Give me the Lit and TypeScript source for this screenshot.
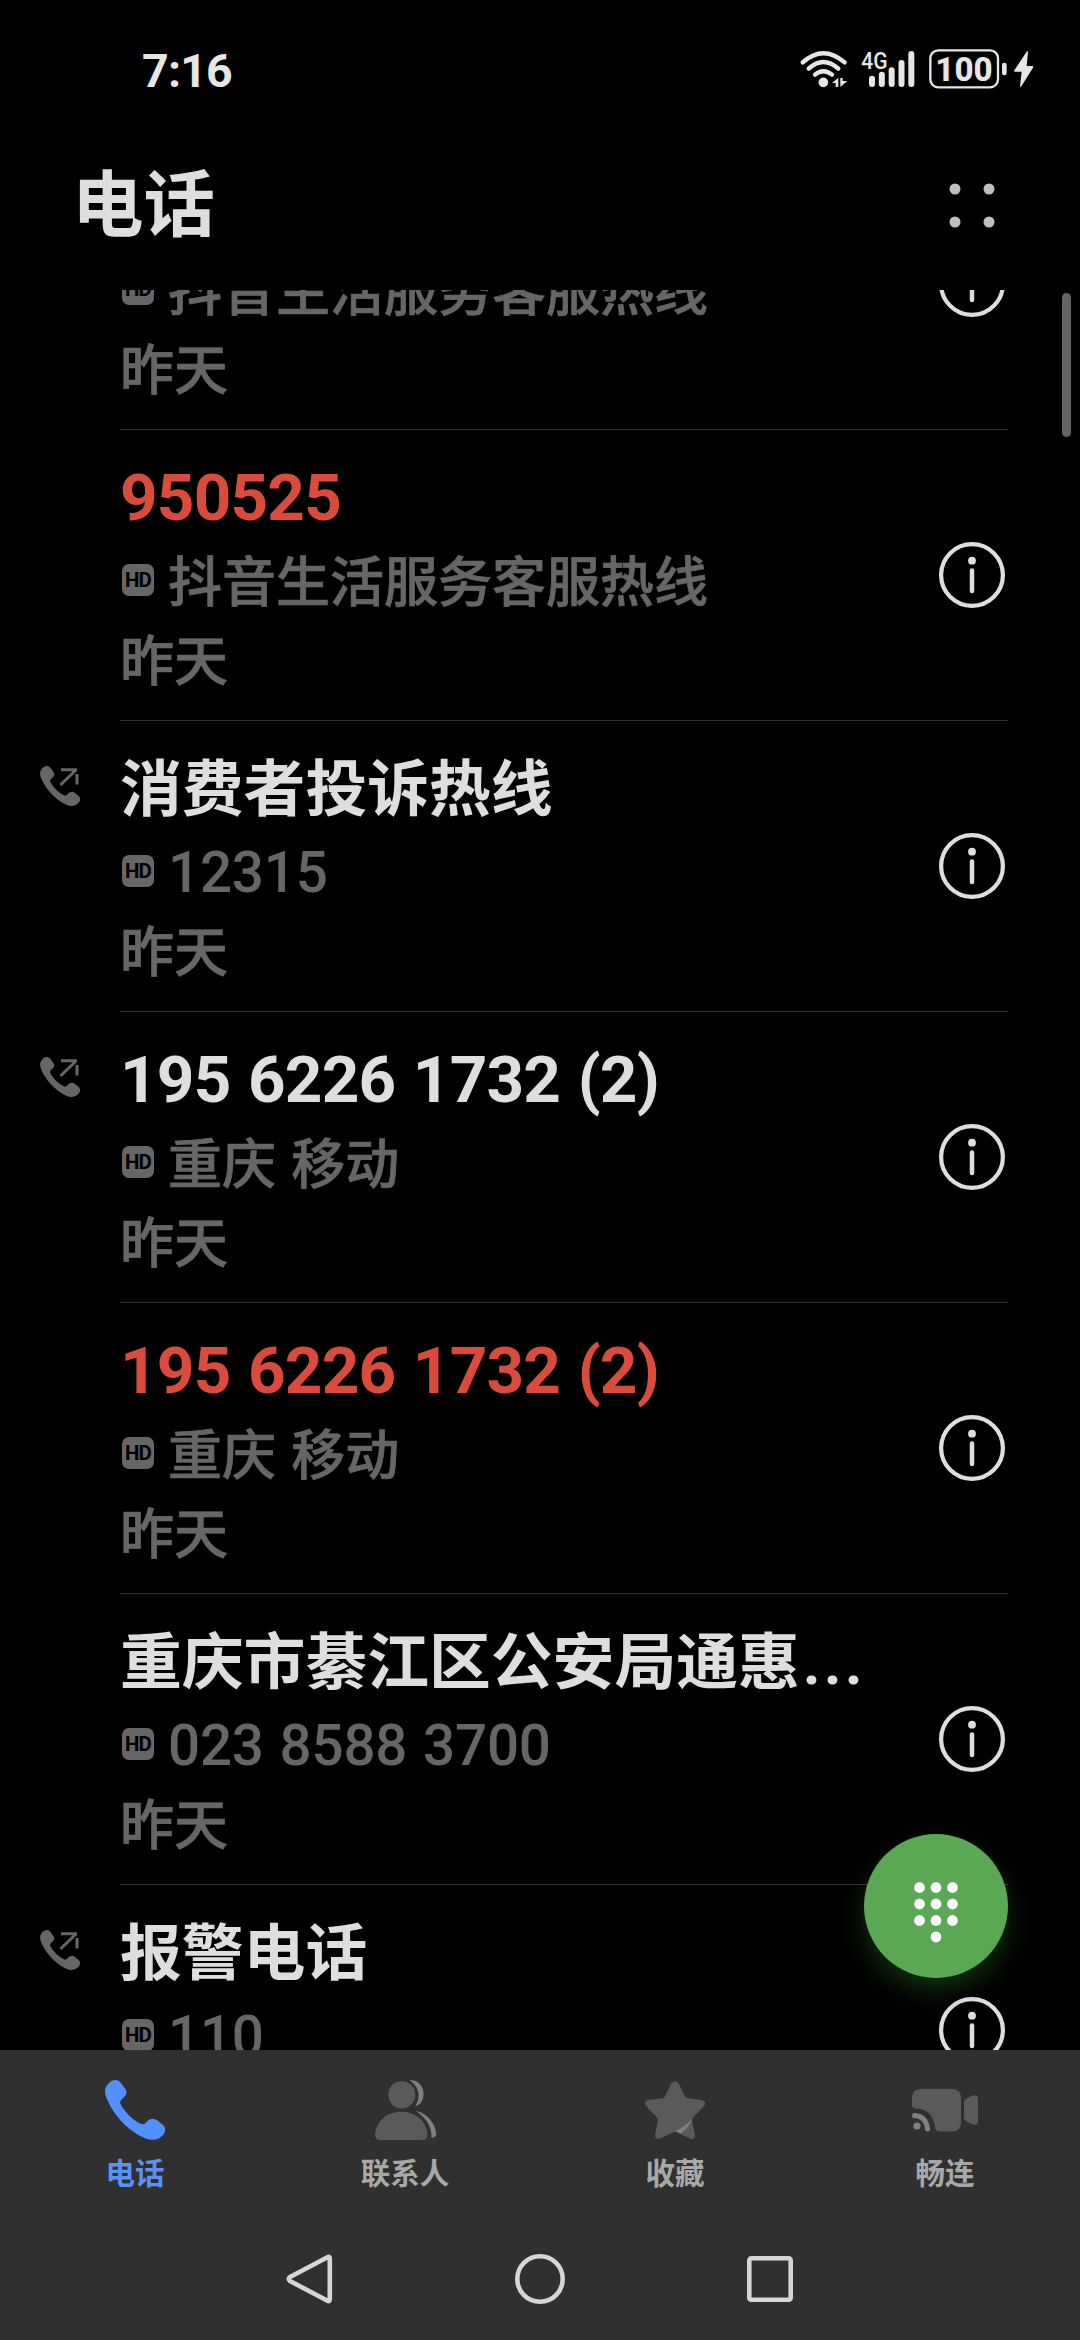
import { LitElement, html, svg, css, nothing } from "lit";
import { customElement, property } from "lit/decorators.js";
import { classMap } from "lit/directives/class-map.js";

interface Call {
  title?: string;
  truncated?: boolean;
  detail: string;
  time?: string;
  missed?: boolean;
  outgoing?: boolean;
}

const CALLS: Call[] = [
  { detail: "抖音生活服务客服热线", time: "昨天", missed: true },
  { title: "950525", detail: "抖音生活服务客服热线", time: "昨天", missed: true },
  { title: "消费者投诉热线", detail: "12315", time: "昨天", outgoing: true },
  { title: "195 6226 1732 (2)", detail: "重庆 移动", time: "昨天", outgoing: true },
  { title: "195 6226 1732 (2)", detail: "重庆 移动", time: "昨天", missed: true },
  { title: "重庆市綦江区公安局通惠", truncated: true, detail: "023 8588 3700", time: "昨天" },
  { title: "报警电话", detail: "110", outgoing: true },
];

const isNumeric = (s: string) => /^[\d\s()]+$/.test(s);

// Handset drawn on a 60 x 60 grid, shared by the call rows and the first tab.
const HANDSET =
  "M3.5 3.5C7.5 -.8 12.500 -1 15.500 2.500L20 8.500C22.500 12 21.800 14.800 19 17.200L16.500 19.500C15 21 14.800 22.500 15.800 24.500C20 32.500 28 40 35 43.500C37.500 44.800 39 44.500 40.500 43L42.500 41C45.500 38.200 49 38 52 40.200L57.500 44.500C61.500 47.800 60.800 52.500 57 56C52 60.500 46 60.800 39.500 58C22 50.500 7 33 1.200 17C-.8 11.500 -.2 7.300 3.500 3.500Z";

@customElement("status-bar")
export class StatusBar extends LitElement {
  static styles = css`
    :host { display: flex; justify-content: space-between; height: 140px; box-sizing: border-box; padding: 30px 0 0 142px; color: #e6e6e6; }
    .clock { font: 700 46.500px/82px Roboto, sans-serif; letter-spacing: -0.8px; height: 80px; }
    svg { display: block; }
    .net { font: 500 70px Roboto, sans-serif; }
    .level { font: 800 98px Roboto, sans-serif; }
  `;
  render() {
    const bars = [137, 125, 112, 90, 63];
    return html`
      <div class="clock">7:16</div>
      <svg width="300" height="80" viewBox="0 0 900 240" fill="#e6e6e6">
        <g fill="none" stroke="#e6e6e6" stroke-width="13" stroke-linecap="round">
          <path d="M68 97Q130 42 194 97" />
          <path d="M86 116Q130 76 175 116" />
          <path d="M105 134Q130 113 156 134" />
        </g>
        <circle cx="130" cy="157" r="14.500" />
        <path d="M175 143V171H167V159H156Z" />
        <path d="M181 171V144H188V153H202Z" />
        <text class="net" x="244" y="117" textLength="79" lengthAdjust="spacingAndGlyphs">4G</text>
        ${bars.map(
          (y, i) => svg`<rect x=${267 + i * 29.500} y=${y} width="18" height=${171 - y} rx="9" />`,
        )}
        <rect x="451" y="61" width="203" height="111" rx="24" fill="none" stroke="#e6e6e6" stroke-width="7" />
        <text class="level" x="466" y="153" textLength="172" lengthAdjust="spacingAndGlyphs">100</text>
        <rect x="666" y="98" width="14" height="38" rx="7" />
        <path d="M741 64L702 122Q702 125 705 125H725L720 170Q722 172 724 169L760 112Q760 108 756 108H740L744 66Q743 62 741 64Z" />
      </svg>
    `;
  }
}

@customElement("call-row")
export class CallRow extends LitElement {
  @property({ attribute: false }) call!: Call;

  static styles = css`
    :host { display: flex; height: 291px; box-sizing: border-box; flex: none; }
    .direction { width: 120px; flex: none; box-sizing: border-box; padding: 45px 0 0 40px; }
    svg { display: block; overflow: visible; }
    .body { display: flex; width: 888px; box-sizing: border-box; border-bottom: 1px solid #333; align-items: center; justify-content: space-between; }
    .text { width: 760px; display: flex; flex-direction: column; height: 290px; box-sizing: border-box; padding-top: 17px; }
    .title { height: 92px; line-height: 92px; font-size: 61.800px; font-weight: 700; color: #dedede; white-space: nowrap; }
    .title.missed { color: #da4b3c; }
    .title.num { font-family: Roboto, sans-serif; font-size: 65.600px; line-height: 101px; letter-spacing: -0.8px; word-spacing: 2px; }
    .dots { font-family: Roboto, sans-serif; letter-spacing: 3px; margin-left: 3px; }
    .line { display: flex; align-items: center; height: 80px; line-height: 80px; font-size: 54px; font-weight: 500; color: #666; white-space: pre; }
    .cjk { word-spacing: 3px; -webkit-text-stroke: 0.7px #666; }
    .line .num { font-family: Roboto, sans-serif; font-size: 56.500px; padding-top: 5px; letter-spacing: -0.2px; word-spacing: 2px; }
    .when { height: 78px; line-height: 78px; }
    .hd { width: 32px; height: 32px; border-radius: 7px; background: #666; color: #000; font: 700 20.500px/32px Roboto, sans-serif; letter-spacing: -0.9px; text-align: center; margin: 2px 14px 0 2px; }
    .info { margin-right: 3px; }
  `;

  render() {
    const { title = "", truncated, detail, time, missed, outgoing } = this.call;
    const numeric = isNumeric(detail);
    return html`
      <div class="direction">
        ${outgoing
          ? svg`<svg width="40" height="40" viewBox="0 0 40 40" fill="#666">
              <path transform="scale(.667)" d=${HANDSET} />
              <path d="M20.500 19L36 4M21 3.800H37M37 8V18.500" fill="none" stroke="#666" stroke-width="3" />
            </svg>`
          : nothing}
      </div>
      <div class="body">
        <div class="text">
          <div class=${classMap({ title: true, missed: !!missed, num: isNumeric(title) })}>${title}${truncated ? html`<span class="dots">...</span>` : nothing}</div>
          <div class="line"><span class="hd">HD</span><span class=${classMap({ num: numeric, cjk: !numeric })}>${detail}</span></div>
          ${time ? html`<div class="line when cjk">${time}</div>` : nothing}
        </div>
        <svg class="info" width="66" height="66" viewBox="0 0 66 66">
          <circle cx="33" cy="33" r="30.900" fill="none" stroke="#dedede" stroke-width="4.200" />
          <circle cx="33" cy="18.700" r="3.900" fill="#dedede" />
          <path d="M33 28.500V49" stroke="#dedede" stroke-width="4.500" stroke-linecap="round" />
        </svg>
      </div>
    `;
  }
}

@customElement("tab-bar")
export class TabBar extends LitElement {
  static styles = css`
    :host { display: grid; grid-template-columns: repeat(4, 1fr); height: 144px; }
    .tab { display: flex; flex-direction: column; align-items: center; padding-top: 30px; color: #a8a8a8; }
    .active { color: #5b93f5; }
    .label { font-size: 29.500px; font-weight: 700; line-height: 40px; margin-top: 11px; }
    svg { display: block; overflow: visible; }
  `;
  render() {
    return html`
      <div class="tab active">
        <svg width="60" height="60" viewBox="0 0 60 60"><path fill="#5291ff" d=${HANDSET} /></svg>
        <div class="label">电话</div>
      </div>
      <div class="tab">
        <svg width="60" height="60" viewBox="0 0 60 60" fill="#5a5a5a">
          <ellipse cx="26.800" cy="14.800" rx="13.500" ry="13.800" />
          <path d="M0 54C1.500 41 12 31.800 26.500 31.800S51.500 42 52.500 54Q52.500 60 47 60H5.500Q0 60 0 54Z" />
          <path fill="#808080" d="M34.500 .3C42 -1 48.500 5.500 48.500 13.500C48.500 20 45.500 25 40 26.500C46 18.500 45 7 34.500 .3Z" />
          <path fill="#808080" d="M41 31C52.500 33 60 43 61.300 54Q61 57.500 56.500 58C57 47 51.500 38 41 31Z" />
        </svg>
        <div class="label">联系人</div>
      </div>
      <div class="tab">
        <svg width="60" height="60" viewBox="0 0 60 60" fill="#5a5a5a">
          <path d="M26.300 3.500Q30 -.8 33.700 3.500L40 16.500Q40.500 18 42.500 18.300L57 20Q62 22 59 26L48 37.500Q46.800 38.800 47 40.500L50 55Q49.500 60.500 45 58.500L30 51.500L15 58.500Q10 60 10 55L12.800 40.500Q13 38.500 12 37.500L1 26Q-2 22 3 20L17.500 18.300Q19.500 18 20 16.500Z" />
          <path fill="#808080" d="M30 51Q40 47 47.500 38.500Q44 47 36 53.800Z" />
        </svg>
        <div class="label">收藏</div>
      </div>
      <div class="tab">
        <svg width="66" height="60" viewBox="0 0 66 60" fill="#5a5a5a">
          <path d="M9 9H40Q49 9 49 18V42Q49 51.500 40 51.500H28Q23.500 51.500 23 47Q21 29.500 4 28.500Q0 28.300 0 25V18Q0 9 9 9Z" />
          <path d="M52 22Q52 20 54 19L61 15.500Q66 14 66 19V41Q66 46 61 44.500L54 41Q52 40 52 38Z" />
          <circle cx="5" cy="46" r="3.600" fill="#808080" />
          <path d="M2.500 35.500Q14 36 15.500 49" fill="none" stroke="#808080" stroke-width="5" stroke-linecap="round" />
        </svg>
        <div class="label">畅连</div>
      </div>
    `;
  }
}

@customElement("app-root")
export class AppRoot extends LitElement {
  static styles = css`
    :host { display: flex; flex-direction: column; position: relative; width: 1080px; height: 2340px; overflow: hidden; background: #000; font-family: "Noto Sans CJK SC", sans-serif; }
    header { display: flex; justify-content: space-between; height: 150px; flex: none; box-sizing: border-box; padding: 6px 84px 0 72px; }
    h1 { margin: 0; font-size: 71.500px; line-height: 106px; font-weight: 700; color: #dedede; }
    .more { display: block; margin-top: 35px; }
    .list { display: flex; flex-direction: column; justify-content: flex-start; height: 1760px; flex: none; overflow: hidden; }
    .first { margin-top: -151px; }
    .thumb { position: absolute; left: 1062px; top: 293px; width: 9px; height: 144px; border-radius: 5px; background: #636363; }
    .fab { position: absolute; left: 864px; top: 1834px; width: 144px; height: 144px; border-radius: 50%; background: #5ba854; box-shadow: 0 12px 26px rgba(60, 150, 50, 0.32); }
    .bottom { display: flex; flex-direction: column; flex: 1; background: #303030; }
    .nav { display: flex; justify-content: center; align-items: center; gap: 180px; padding-top: 60px; }
    svg { display: block; }
  `;
  render() {
    const keys = [0, 1, 2].flatMap((r) => [0, 1, 2].map((c) => [55.500 + c * 16.500, 53.500 + r * 16.500]));
    keys.push([72, 103]);
    return html`
      <status-bar></status-bar>
      <header>
        <h1>电话</h1>
        <svg class="more" width="48" height="48" viewBox="0 0 48 48" fill="#c0c0c0">
          <circle cx="7" cy="8" r="5.500" /><circle cx="41" cy="8" r="5.500" />
          <circle cx="7" cy="41" r="5.500" /><circle cx="41" cy="41" r="5.500" />
        </svg>
      </header>
      <div class="list">
        ${CALLS.map((c, i) => html`<call-row class=${classMap({ first: i === 0 })} .call=${c}></call-row>`)}
      </div>
      <div class="thumb"></div>
      <div class="fab">
        <svg width="144" height="144" viewBox="0 0 144 144" fill="#fff">
          ${keys.map(([x, y]) => svg`<circle cx=${x} cy=${y} r="5.400" />`)}
        </svg>
      </div>
      <div class="bottom">
        <tab-bar></tab-bar>
        <div class="nav">
          <svg width="50" height="50" viewBox="0 0 50 50" fill="none" stroke="#d6d6d6" stroke-width="4.600">
            <path stroke-linejoin="round" d="M42.500 3.200Q44.800 2 44.800 5V45Q44.800 48 42.500 46.800L5 27Q2.500 25 5 23Z" />
          </svg>
          <svg width="50" height="50" viewBox="0 0 50 50" fill="none" stroke="#d6d6d6" stroke-width="4.600">
            <circle cx="25" cy="25" r="22.700" />
          </svg>
          <svg width="50" height="50" viewBox="0 0 50 50" fill="none" stroke="#d6d6d6" stroke-width="4.600">
            <rect x="4.300" y="4.300" width="41.400" height="41.400" rx="2" />
          </svg>
        </div>
      </div>
    `;
  }
}
